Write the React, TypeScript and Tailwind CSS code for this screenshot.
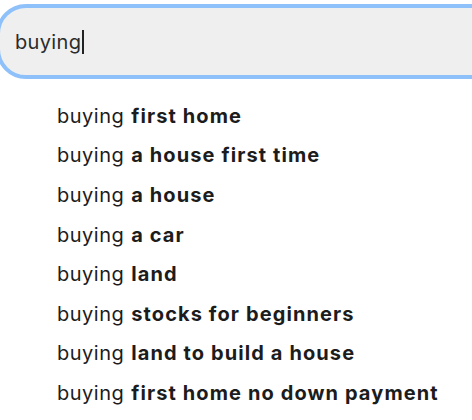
const suggestions = [
  'first home',
  'a house first time',
  'a house',
  'a car',
  'land',
  'stocks for beginners',
  'land to build a house',
  'first home no down payment',
];

export default function App() {
  return (
    <div className="w-[472px] h-[420px] overflow-hidden bg-white font-['Inter',sans-serif]">
      <div className="pt-1 -ml-1">
        <div className="w-[520px] h-[75px] border-4 border-[#8ec0fa] rounded-[30px] bg-[#efefef] flex items-center pl-[15px]">
          <span className="text-[20px] text-[#2b2b2b] tracking-[0.35px]">buying</span>
          <span className="w-[1.5px] h-[24px] bg-[#222] ml-[1px]" />
        </div>
      </div>
      <ul className="pl-[57px] pt-[17px] flex flex-col">
        {suggestions.map((s) => (
          <li key={s} className="h-[39.6px] flex items-center text-[20px] text-[#1c1c1c] whitespace-nowrap">
            <span className="tracking-[0.5px]">buying</span>
            <span className="w-[7px]" />
            <span className="font-bold tracking-[1.1px]">{s}</span>
          </li>
        ))}
      </ul>
    </div>
  );
}
